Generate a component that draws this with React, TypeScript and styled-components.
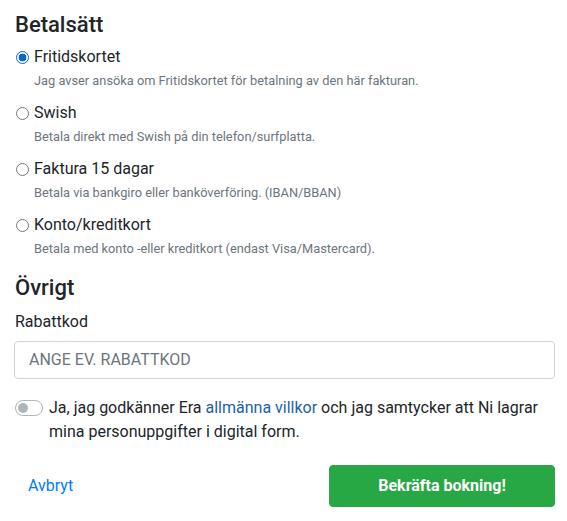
import React from "react";
import styled, { createGlobalStyle } from "styled-components";

const GlobalStyle = createGlobalStyle`
  body {
    margin: 0;
    background: #fff;
    font-family: Roboto, "Liberation Sans", sans-serif;
    color: #212529;
  }
  * { box-sizing: border-box; }
`;

const Page = styled("div")`
  padding: 12px 12px 12px 14px;
`;

const SectionTitle = styled("h2")`
  font-size: 22px;
  font-weight: 500;
  line-height: 1.2;
  margin: 0 0 7px 1px;
`;

const OptionList = styled("div")`
  display: flex;
  flex-direction: column;
  gap: 8px;
  margin-bottom: 14px;
`;

const Option = styled("label")`
  display: grid;
  grid-template-columns: 20px 1fr;
  align-items: center;
  cursor: pointer;
`;

const Radio = styled("span")<{ $checked?: boolean }>`
  width: 13px;
  height: 13px;
  margin-left: 2px;
  border-radius: 50%;
  border: 1px solid ${(p) => (p.$checked ? "#0b65d6" : "#767676")};
  background: ${(p) =>
    p.$checked ? "radial-gradient(circle, #0b65d6 0 3.6px, #fff 4.2px)" : "#fff"};
`;

const OptionLabel = styled("span")`
  font-size: 16px;
  line-height: 24px;
`;

const OptionHint = styled("span")`
  grid-column: 2;
  font-size: 12.8px;
  line-height: 24px;
  color: #6c757d;
`;

const FieldLabel = styled("div")`
  font-size: 16px;
  line-height: 24px;
  margin: 8px 0 7px 1px;
`;

const TextInput = styled("input")`
  display: block;
  width: 100%;
  height: 38px;
  padding: 6px 14px;
  font-family: inherit;
  font-size: 16px;
  border: 1px solid #ced4da;
  border-radius: 4px;
  color: #495057;
  &::placeholder {
    color: #6c757d;
    text-transform: uppercase;
  }
`;

const ConsentRow = styled("div")`
  display: flex;
  align-items: flex-start;
  gap: 6px;
  margin-top: 17px;
`;

const Switch = styled("span")`
  flex: none;
  position: relative;
  width: 28px;
  height: 16px;
  margin: 4px 0 0 1px;
  border: 1px solid #adb5bd;
  border-radius: 8px;
  background: #fff;
  &::after {
    content: "";
    position: absolute;
    left: 2px;
    top: 2px;
    width: 10px;
    height: 10px;
    border-radius: 50%;
    background: #adb5bd;
  }
`;

const ConsentText = styled("p")`
  margin: 0;
  font-size: 16px;
  line-height: 24px;
`;

const Link = styled("a")`
  color: #1d5fa8;
  text-decoration: none;
`;

const Actions = styled("div")`
  display: flex;
  justify-content: space-between;
  align-items: center;
  margin-top: 21px;
`;

const CancelButton = styled("button")`
  background: none;
  border: none;
  padding: 6px 14px;
  font-family: inherit;
  font-size: 16px;
  color: #007bff;
  cursor: pointer;
`;

const ConfirmButton = styled("button")`
  width: 226px;
  height: 42px;
  background: #28a745;
  border: 1px solid #28a745;
  border-radius: 4px;
  color: #fff;
  font-family: inherit;
  font-size: 16px;
  font-weight: 700;
  cursor: pointer;
`;

const options = [
  {
    label: "Fritidskortet",
    hint: "Jag avser ansöka om Fritidskortet för betalning av den här fakturan.",
  },
  { label: "Swish", hint: "Betala direkt med Swish på din telefon/surfplatta." },
  {
    label: "Faktura 15 dagar",
    hint: "Betala via bankgiro eller banköverföring. (IBAN/BBAN)",
  },
  {
    label: "Konto/kreditkort",
    hint: "Betala med konto -eller kreditkort (endast Visa/Mastercard).",
  },
];

export default function App() {
  const [selected, setSelected] = React.useState(0);
  return (
    <>
      <GlobalStyle />
      <Page>
        <SectionTitle>Betalsätt</SectionTitle>
        <OptionList>
          {options.map((o, i) => (
            <Option key={o.label} onClick={() => setSelected(i)}>
              <Radio $checked={selected === i} />
              <OptionLabel>{o.label}</OptionLabel>
              <OptionHint>{o.hint}</OptionHint>
            </Option>
          ))}
        </OptionList>
        <SectionTitle>Övrigt</SectionTitle>
        <FieldLabel>Rabattkod</FieldLabel>
        <TextInput placeholder="Ange ev. rabattkod" />
        <ConsentRow>
          <Switch />
          <ConsentText>
            Ja, jag godkänner Era <Link href="#">allmänna villkor</Link> och jag
            samtycker att Ni lagrar mina personuppgifter i digital form.
          </ConsentText>
        </ConsentRow>
        <Actions>
          <CancelButton>Avbryt</CancelButton>
          <ConfirmButton>Bekräfta bokning!</ConfirmButton>
        </Actions>
      </Page>
    </>
  );
}
